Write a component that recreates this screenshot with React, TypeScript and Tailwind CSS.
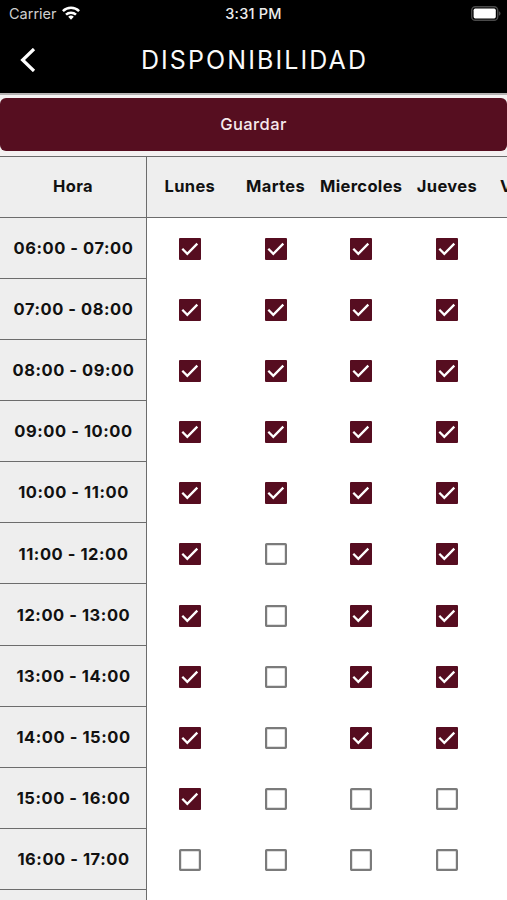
const days = ['Lunes', 'Martes', 'Miercoles', 'Jueves', 'Viernes']

const rows = [
  { hour: '06:00 - 07:00', slots: [true, true, true, true] },
  { hour: '07:00 - 08:00', slots: [true, true, true, true] },
  { hour: '08:00 - 09:00', slots: [true, true, true, true] },
  { hour: '09:00 - 10:00', slots: [true, true, true, true] },
  { hour: '10:00 - 11:00', slots: [true, true, true, true] },
  { hour: '11:00 - 12:00', slots: [true, false, true, true] },
  { hour: '12:00 - 13:00', slots: [true, false, true, true] },
  { hour: '13:00 - 14:00', slots: [true, false, true, true] },
  { hour: '14:00 - 15:00', slots: [true, false, true, true] },
  { hour: '15:00 - 16:00', slots: [true, false, false, false] },
  { hour: '16:00 - 17:00', slots: [false, false, false, false] },
]

function Checkbox({ checked }: { checked: boolean }) {
  return (
    <svg viewBox="0 0 22 22" className="mt-[1px] size-[22px]" role="checkbox" aria-checked={checked}>
      {checked ? (
        <>
          <rect width="22" height="22" rx="1" fill="#560d20" />
          <path d="M3.3 10.8l5 5 10-10.2" fill="none" stroke="#fff" strokeWidth="2.3" />
        </>
      ) : (
        <rect x="1.1" y="1.1" width="19.8" height="19.8" rx="0.6" fill="#fff" stroke="#7b7b7b" strokeWidth="2.2" />
      )}
    </svg>
  )
}

function StatusBar() {
  return (
    <div className="grid h-[27px] grid-cols-3 items-center pl-[9px] pr-[6px]">
      <div className="flex items-center gap-[5px] text-[14.5px] text-[#cfcfcf]">
        <span>Carrier</span>
        <svg viewBox="0 0 18 14" className="mb-[2px] h-[14px] w-[18px]" fill="none" stroke="#fff" strokeWidth="2.5">
          <path d="M0.9 5.2a11.5 11.5 0 0 1 16.2 0" />
          <path d="M4 8.7a7.1 7.1 0 0 1 10 0" />
          <path d="M9 13.7l-2.8-2.9a4 4 0 0 1 5.6 0z" fill="#fff" stroke="none" />
        </svg>
      </div>
      <span className="pr-[3px] text-center text-[14.5px] font-medium tracking-[0.2px] text-[#ececec]">3:31 PM</span>
      <svg viewBox="0 0 30 15" className="mb-[1px] h-[15px] w-[30px] justify-self-end">
        <rect x="0.7" y="0.7" width="26" height="13.6" rx="3.6" fill="none" stroke="#4a4a4a" strokeWidth="1.4" />
        <rect x="2.6" y="2.6" width="22.2" height="9.8" rx="1.6" fill="#fff" />
        <path d="M27.8 5.2a2.4 2.4 0 0 1 0 4.6z" fill="#4a4a4a" />
      </svg>
    </div>
  )
}

export default function App() {
  return (
    <div className="flex h-[900px] w-[507px] flex-col overflow-hidden bg-white font-['Inter','Liberation_Sans',sans-serif] text-[#111]">
      <header className="h-[93px] shrink-0 bg-black">
        <StatusBar />
        <div className="grid h-[66px] grid-cols-[60px_1fr_60px] items-center">
          <button className="pl-[20px]" aria-label="Volver">
            <svg viewBox="0 0 16 24" className="h-[24px] w-[16px]" fill="none" stroke="#fff" strokeWidth="3.2">
              <path d="M14 1L2.6 12 14 23" />
            </svg>
          </button>
          <h1 className="pt-[2px] pl-[2px] text-center text-[25px] tracking-[2.1px] whitespace-nowrap text-[#fafafa]">
            DISPONIBILIDAD
          </h1>
        </div>
      </header>

      <div className="shrink-0 border-t-2 border-[#b4b1b1] bg-[#f4f1f1] pt-[3px] pb-[4.6px]">
        <button className="h-[53px] w-full rounded-[6px] bg-[#560e20] text-[16.5px] font-medium tracking-[0.4px] text-[#f5e9ec]">
          Guardar
        </button>
      </div>

      {/* Schedule */}
      <div className="flex h-[62.3px] shrink-0 border-y border-[#6c6c6c] bg-[#eee] text-[16.5px] font-bold tracking-[0.35px]">
        <div className="flex w-[147px] shrink-0 items-center justify-center border-r border-[#6c6c6c]">Hora</div>
        {days.map((day) => (
          <div key={day} className="flex w-[85.7px] shrink-0 items-center justify-center">
            {day}
          </div>
        ))}
      </div>
      {rows.map((row) => (
        <div key={row.hour} className="flex h-[61.1px] shrink-0">
          <div className="flex w-[147px] shrink-0 items-center justify-center border-r border-b border-[#6c6c6c] bg-[#eee] pt-[1px] pl-[1px] text-[16.5px] font-bold tracking-[0.55px]">
            {row.hour}
          </div>
          {row.slots.map((checked, i) => (
            <div key={days[i]} className="flex w-[85.7px] shrink-0 items-center justify-center">
              <Checkbox checked={checked} />
            </div>
          ))}
        </div>
      ))}
      <div className="h-[61.1px] w-[147px] shrink-0 border-r border-[#6c6c6c] bg-[#eee]" />
    </div>
  )
}
